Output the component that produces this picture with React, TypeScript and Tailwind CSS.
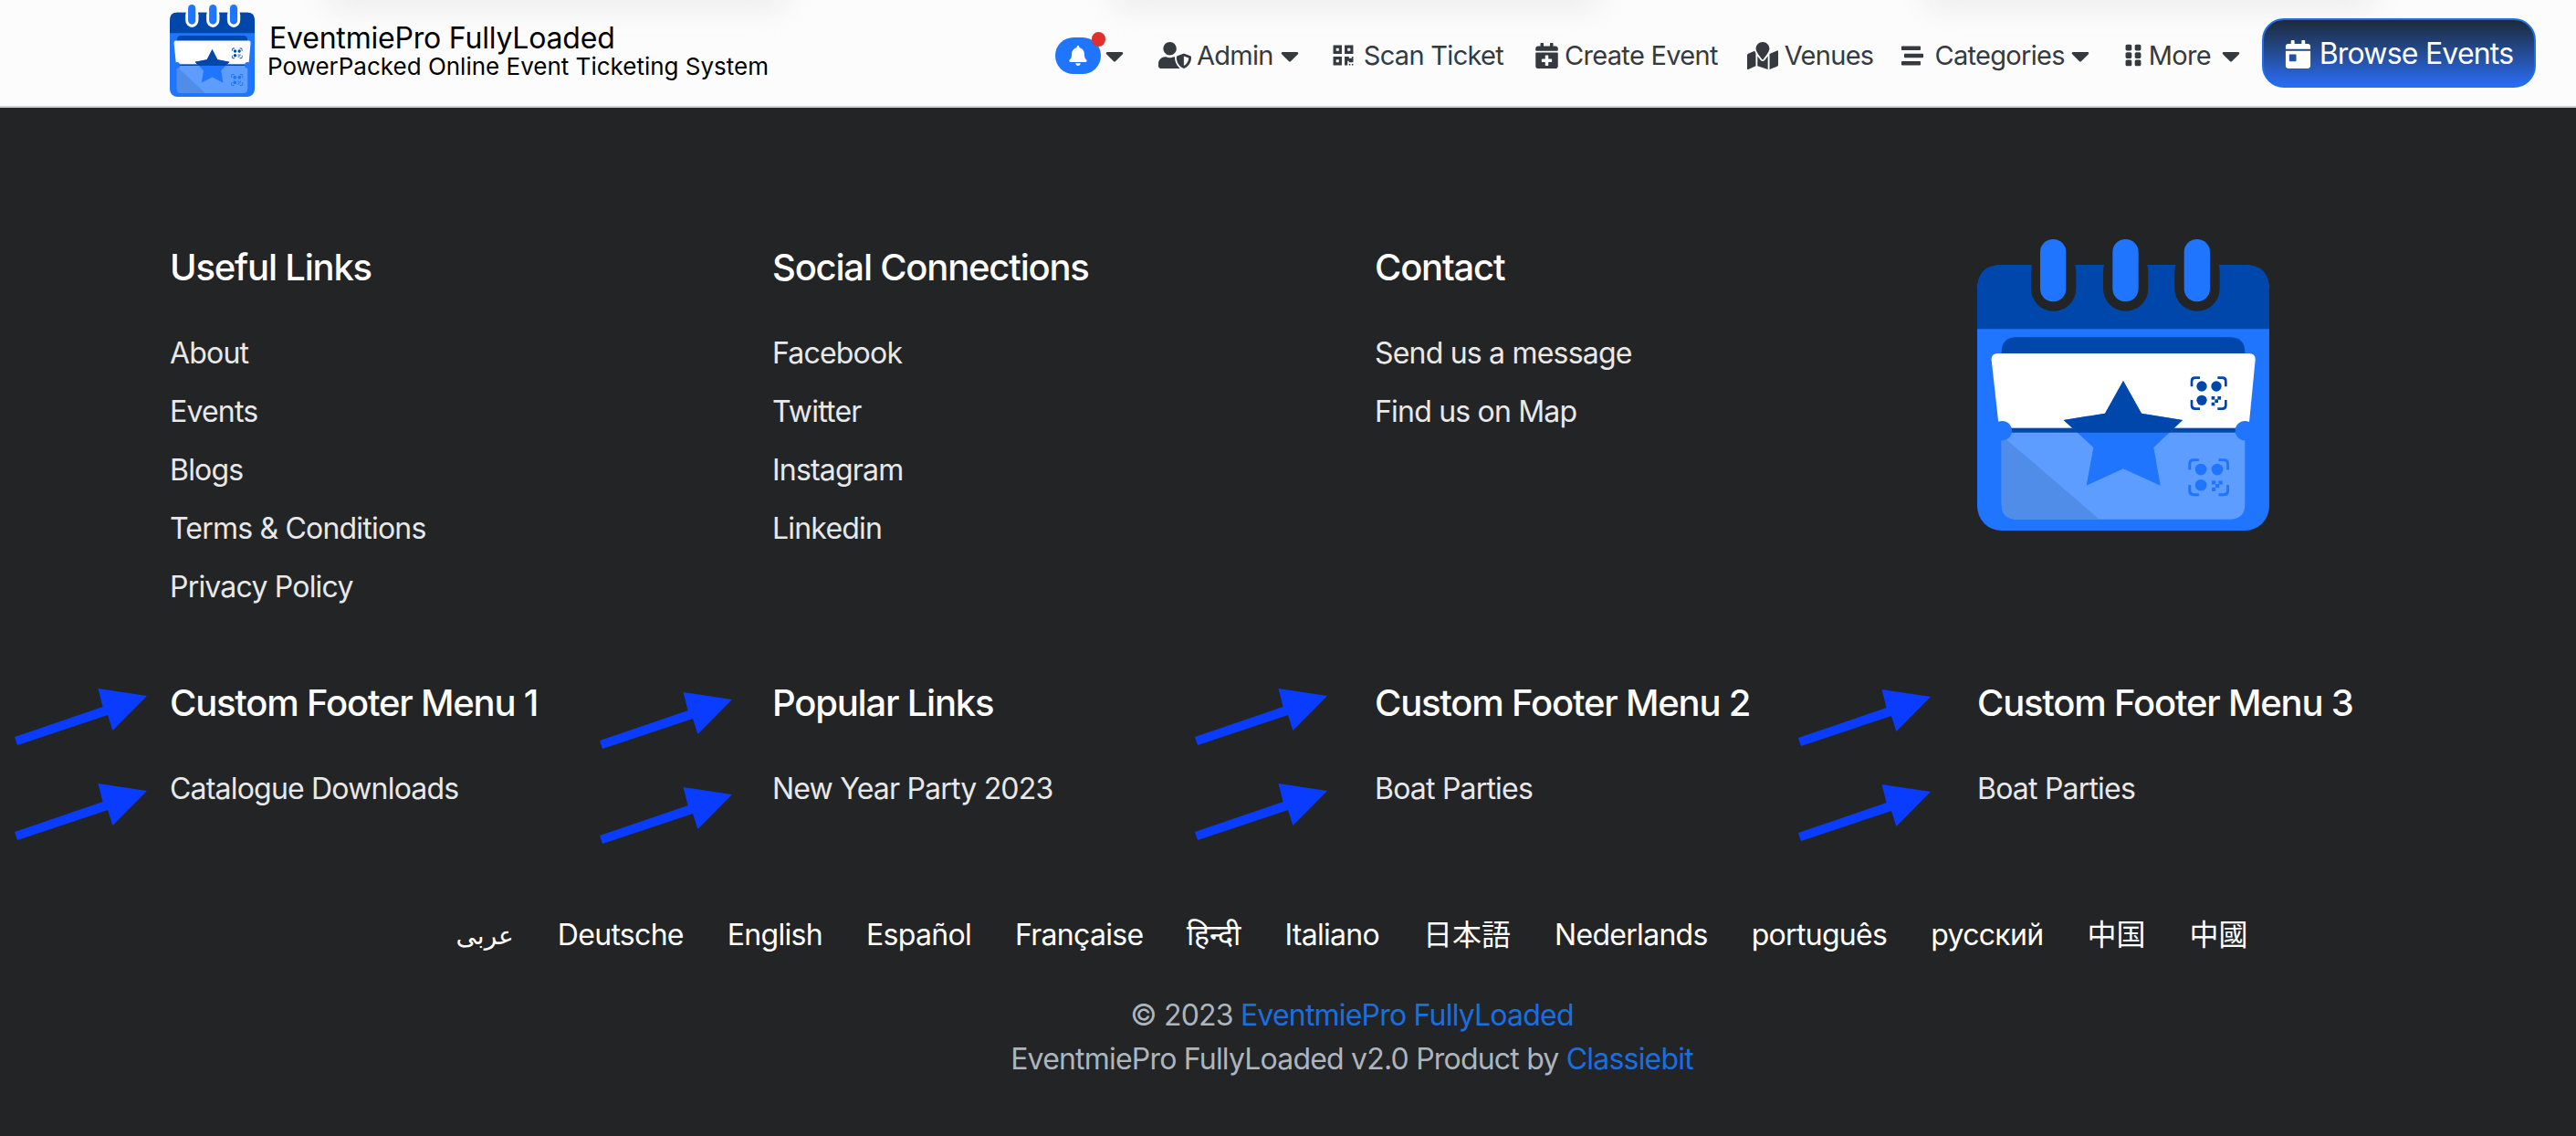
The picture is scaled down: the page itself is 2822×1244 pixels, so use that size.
import React from "react";
import { FaBell, FaCaretDown, FaUserShield, FaQrcode, FaCalendarPlus, FaMapMarked, FaStream, FaGripVertical, FaCalendarDay } from "react-icons/fa";

function Qr({ y, fill, s = 1 }: { y: number; fill: string; s?: number }) {
  return (
    <g transform={`translate(869 ${y}) scale(${s})`} fill={fill} stroke="none">
      <circle cx="-23" cy="-23" r="17" />
      <circle cx="25" cy="-23" r="17" />
      <circle cx="-23" cy="23" r="17" />
      <rect x="9" y="10" width="11" height="11" />
      <rect x="29" y="10" width="11" height="11" />
      <rect x="20" y="20" width="11" height="11" />
      <rect x="9" y="30" width="11" height="11" />
      <path d="M-60 -22 v-18 q0 -15 15 -15 h16 v8 h-14 q-9 0 -9 9 v16 z M60 -22 v-18 q0 -15 -15 -15 h-16 v8 h14 q9 0 9 9 v16 z M-60 22 v18 q0 15 15 15 h16 v-8 h-14 q-9 0 -9 -9 v-16 z M60 22 v18 q0 15 -15 15 h-16 v-8 h14 q9 0 9 -9 v-16 z" />
    </g>
  );
}

function Logo({ hole, className }: { hole: string; className: string }) {
  return (
    <svg viewBox="108 68 960 957" preserveAspectRatio="none" className={className}>
      <rect x="108" y="152" width="960" height="873" rx="80" fill="#1f75fe" />
      <path d="M108 363V232Q108 152 188 152H988Q1068 152 1068 232V363Z" fill="#0047ab" />
      {[285, 522, 757].map((x) => (
        <rect key={x} x={x} y="100" width="148" height="204" rx="74" fill={hole} />
      ))}
      {[315, 553, 788].map((x) => (
        <rect key={x} x={x} y="68" width="85" height="205" rx="42" fill="#1f75fe" />
      ))}
      <path d="M188 700V440Q188 390 238 390H938Q988 390 988 440V700Z" fill="#0047ab" />
      <path d="M188 700H988V938Q988 988 938 988H238Q188 988 188 938Z" fill="#5c9dff" />
      <path d="M188 712L510 988H238Q188 988 188 938Z" fill="#508de8" />
      <path d="M155 465Q154 443 175 443H1002Q1023 443 1022 465L1000 690H180Z" fill="#ffffff" />
      <rect x="188" y="688" width="800" height="15" fill="#0047ab" />
      <circle cx="190" cy="697" r="32" fill="#1f75fe" />
      <circle cx="988" cy="697" r="32" fill="#1f75fe" />
      <polygon points="588,533 648,640 783,662 688,752 710,877 588,822 467,877 490,752 392,662 528,640" fill="#1f75fe" />
      <polygon points="588,533 648,640 783,662 740,703 437,703 392,662 528,640" fill="#0047ab" />
      <Qr y={574} fill="#0047ab" />
      <Qr y={850} fill="#1f75fe" s={1.12} />
    </svg>
  );
}

function Arrow({ x, y }: { x: number; y: number }) {
  return (
    <svg className="absolute" style={{ left: x, top: y }} width="150" height="66" viewBox="14 752 150 66">
      <polygon points="16,807 112.6,774 107.5,754 161,762 123.4,800 118,783 19,816" fill="#0a3cff" />
    </svg>
  );
}

const Heading = ({ children }: { children: React.ReactNode }) => (
  <h5 className="text-[40px] leading-[44px] font-medium text-white tracking-[-1.2px] whitespace-nowrap">{children}</h5>
);

function LinkList({ items }: { items: string[] }) {
  return (
    <ul className="mt-[40px]">
      {items.map((t) => (
        <li key={t} className="h-[64px] text-[32px] leading-[64px] tracking-[-0.8px] text-white/90 whitespace-nowrap">{t}</li>
      ))}
    </ul>
  );
}

const NavText = ({ children }: { children: React.ReactNode }) => (
  <span className="text-[29px] leading-[40px] tracking-[-0.7px] whitespace-nowrap">{children}</span>
);

const Caret = ({ className = "" }: { className?: string }) => (
  <FaCaretDown className={`w-[20px] h-[32px] shrink-0 ${className}`} />
);

const latin = "tracking-[-0.7px]";
const langs: [string, string][] = [
  ["عربى", "text-[28px]"],
  ["Deutsche", latin],
  ["English", latin],
  ["Español", latin],
  ["Française", latin],
  ["हिन्दी", ""],
  ["Italiano", latin],
  ["日本語", ""],
  ["Nederlands", latin],
  ["português", latin],
  ["русский", latin],
  ["中国", ""],
  ["中國", ""],
];

export default function App() {
  return (
    <div className="relative w-[2822px] h-[1244px] overflow-hidden bg-[#222426] font-['Inter','Noto_Sans_CJK_JP','DejaVu_Sans',sans-serif]">
      <header className="relative h-[118px] border-b-2 border-[#ced0d3] bg-[#fcfcfc] flex items-center pl-[186px] pr-[44px] text-[#343a40] overflow-hidden">
        <div className="absolute top-[-14px] left-[360px] w-[500px] h-[18px] bg-[#e2e2e2] blur-lg" />
        <div className="absolute top-[-14px] left-[1220px] w-[530px] h-[18px] bg-[#e2e2e2] blur-lg" />
        <div className="absolute top-[-14px] left-[2110px] w-[490px] h-[18px] bg-[#e2e2e2] blur-lg" />
        <Logo hole="#fcfcfc" className="w-[93px] h-[101px] shrink-0 mt-[-6px]" />
        <div className="relative ml-[14px] mt-[-6px] text-black whitespace-nowrap">
          <div className="ml-[2px] text-[32px] leading-[38px] tracking-[-0.2px]">EventmiePro FullyLoaded</div>
          <div className="text-[26px] leading-[28px] mt-[-2px]">PowerPacked Online Event Ticketing System</div>
        </div>

        <nav className="relative ml-auto flex items-center">
          <div className="flex items-center mt-[5px]">
            <div className="relative flex items-center">
              <span className="w-[50px] h-[40px] rounded-[20px] bg-[#1f75fe] flex items-center justify-center text-white">
                <FaBell className="w-[20px] h-[22px]" />
              </span>
              <span className="absolute left-[40px] top-[-6px] w-[15px] h-[16px] rounded-full bg-[#e0302d]" />
              <Caret className="ml-[5px]" />
            </div>
            <div className="ml-[38px] flex items-center gap-[6px]">
              <FaUserShield className="w-[36px] h-[29px]" />
              <NavText>Admin</NavText>
              <Caret className="ml-[2px]" />
            </div>
            <div className="ml-[36px] flex items-center gap-[10px]">
              <FaQrcode className="w-[25px] h-[25px]" />
              <NavText>Scan Ticket</NavText>
            </div>
            <div className="ml-[35px] flex items-center gap-[7px]">
              <FaCalendarPlus className="w-[25px] h-[28px]" />
              <NavText>Create Event</NavText>
            </div>
            <div className="ml-[32px] flex items-center gap-[7px]">
              <FaMapMarked className="w-[34px] h-[32px]" />
              <NavText>Venues</NavText>
            </div>
            <div className="ml-[30px] flex items-center gap-[11px]">
              <FaStream className="w-[26px] h-[24px]" />
              <NavText>Categories</NavText>
              <Caret className="ml-[-4px]" />
            </div>
            <div className="ml-[38px] flex items-center gap-[7px]">
              <FaGripVertical className="w-[20px] h-[27px]" />
              <NavText>More</NavText>
              <Caret className="ml-[5px]" />
            </div>
          </div>
          <button className="ml-[24px] w-[300px] h-[76px] pt-[2px] rounded-[24px] border-2 border-[#1f6fe8] bg-gradient-to-b from-[#1c2a3c] to-[#2a6cf5] text-white flex items-center justify-center gap-[9px]">
            <FaCalendarDay className="w-[29px] h-[31px]" />
            <span className="text-[32px] leading-[40px] tracking-[-0.8px] whitespace-nowrap">Browse Events</span>
          </button>
        </nav>
      </header>

      <main className="pl-[186px] pt-[153px]">
        <div className="grid grid-cols-[repeat(4,660px)]">
          <div>
            <Heading>Useful Links</Heading>
            <LinkList items={["About", "Events", "Blogs", "Terms & Conditions", "Privacy Policy"]} />
          </div>
          <div>
            <Heading>Social Connections</Heading>
            <LinkList items={["Facebook", "Twitter", "Instagram", "Linkedin"]} />
          </div>
          <div>
            <Heading>Contact</Heading>
            <LinkList items={["Send us a message", "Find us on Map"]} />
          </div>
          <div>
            <Logo hole="#222426" className="w-[320px] h-[319px] mt-[-9px]" />
          </div>
        </div>
        <div className="grid grid-cols-[repeat(4,660px)] mt-[73px]">
          <div>
            <Heading>Custom Footer Menu 1</Heading>
            <LinkList items={["Catalogue Downloads"]} />
          </div>
          <div>
            <Heading>Popular Links</Heading>
            <LinkList items={["New Year Party 2023"]} />
          </div>
          <div>
            <Heading>Custom Footer Menu 2</Heading>
            <LinkList items={["Boat Parties"]} />
          </div>
          <div>
            <Heading>Custom Footer Menu 3</Heading>
            <LinkList items={["Boat Parties"]} />
          </div>
        </div>
      </main>

      <div className="mt-[96px] pl-[140px] flex justify-center gap-[48px] text-[32px] leading-[64px] text-white whitespace-nowrap">
        {langs.map(([l, c]) => (
          <span key={l} className={c}>{l}</span>
        ))}
      </div>
      <div className="mt-[32px] pl-[140px] text-center text-[32px] leading-[48px] tracking-[-0.8px] text-[#adb5bd]">
        <div>© 2023 <span className="text-[#1a6fe0]">EventmiePro FullyLoaded</span></div>
        <div>EventmiePro FullyLoaded v2.0 Product by <span className="text-[#1a6fe0]">Classiebit</span></div>
      </div>

      {[
        [14, 752],
        [655, 756],
        [1307, 752],
        [1968, 753],
      ].map(([x, y]) => (
        <React.Fragment key={x}>
          <Arrow x={x} y={y} />
          <Arrow x={x} y={y + 104} />
        </React.Fragment>
      ))}
    </div>
  );
}
